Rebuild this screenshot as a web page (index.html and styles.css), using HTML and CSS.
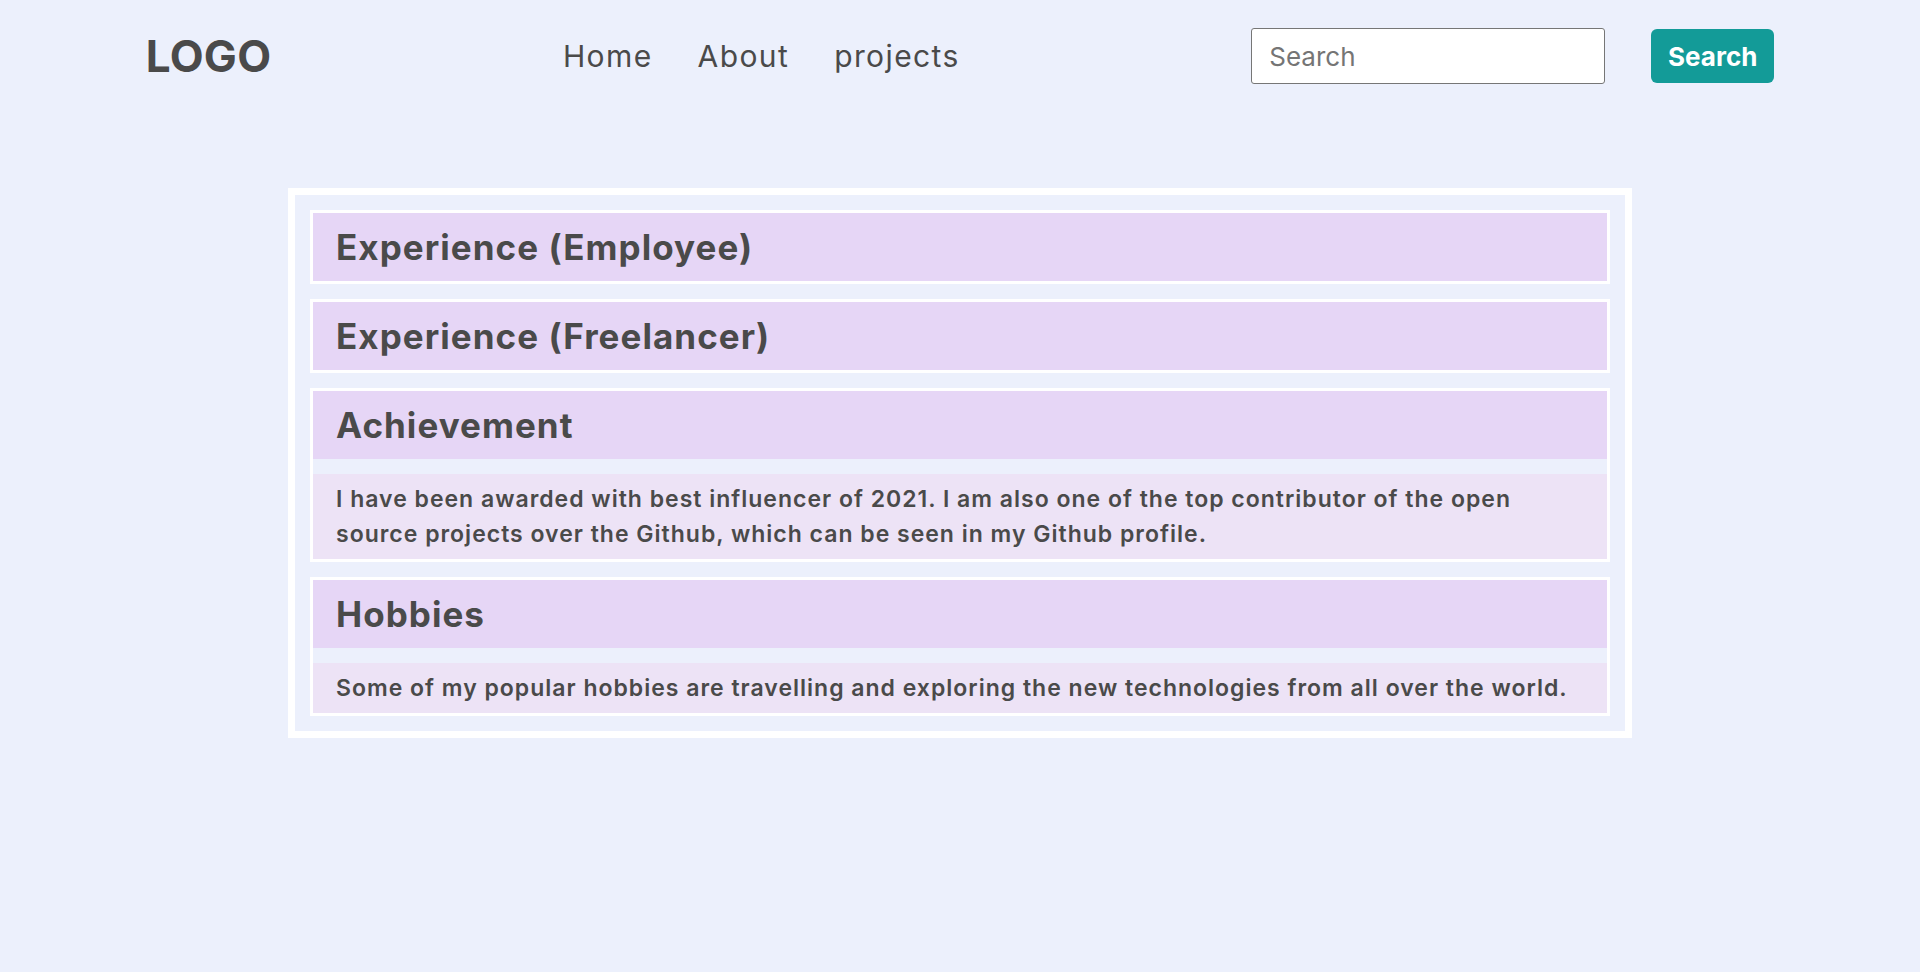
FILE: index.html
```html
<!DOCTYPE html>
<html lang="en">
<head>
<meta charset="utf-8">
<title>Portfolio</title>
<link rel="stylesheet" href="styles.css">
</head>
<body>
<header class="topbar">
  <div class="logo">LOGO</div>
  <ul class="menu">
    <li><a href="#" class="menu-link">Home</a></li>
    <li><a href="#" class="menu-link">About</a></li>
    <li><a href="#" class="menu-link">projects</a></li>
  </ul>
  <form class="search">
    <input type="text" class="search-input" placeholder="Search">
    <button type="button" class="search-btn">Search</button>
  </form>
</header>
<main class="content">
  <section class="box">
    <article class="card">
      <h2 class="card-title">Experience (Employee)</h2>
    </article>
    <article class="card">
      <h2 class="card-title">Experience (Freelancer)</h2>
    </article>
    <article class="card">
      <h2 class="card-title">Achievement</h2>
      <p class="card-text">I have been awarded with best influencer of 2021. I am also one of the top contributor of the open source projects over the Github, which can be seen in my Github profile.</p>
    </article>
    <article class="card">
      <h2 class="card-title">Hobbies</h2>
      <p class="card-text">Some of my popular hobbies are travelling and exploring the new technologies from all over the world.</p>
    </article>
  </section>
</main>
</body>
</html>
```
FILE: styles.css
```css
* { box-sizing: border-box; }

html, body {
  margin: 0;
  padding: 0;
  background: #ecf0fc;
  color: #4a4a4a;
  font-family: Inter, "Noto Sans", sans-serif;
}

.topbar {
  height: 112px;
  display: flex;
  align-items: center;
  justify-content: space-around;
}

.logo {
  font-size: 44px;
  font-weight: 700;
  line-height: 1;
  color: #4a4a4a;
  letter-spacing: 0.3px;
}

.menu {
  list-style: none;
  margin: 0;
  padding: 0;
  display: flex;
  gap: 45px;
}

.menu-link {
  text-decoration: none;
  color: #4a4a4a;
  font-size: 30px;
  font-weight: 400;
  letter-spacing: 1.4px;
  line-height: 1;
}

.search {
  display: flex;
  align-items: center;
  gap: 46px;
  margin: 0;
}

.search-input {
  width: 354px;
  height: 56px;
  border: 1px solid #767676;
  border-radius: 3px;
  background: #fff;
  padding: 0 17px;
  font-family: Inter, "Noto Sans", sans-serif;
  font-size: 26px;
  color: #4a4a4a;
  outline: none;
}

.search-input::placeholder {
  color: #757575;
  opacity: 1;
}

.search-btn {
  width: 123px;
  height: 54px;
  border: none;
  border-radius: 6px;
  background: #139b98;
  color: #fff;
  font-family: Inter, "Noto Sans", sans-serif;
  font-size: 26px;
  font-weight: 700;
  padding: 0;
  cursor: pointer;
}

.content {
  padding-top: 76px;
}

.box {
  width: 1344px;
  margin: 0 auto;
  border: 7px solid #fff;
  padding: 15px;
  display: flex;
  flex-direction: column;
  gap: 15px;
}

.card {
  border: 3px solid #fff;
  display: flex;
  flex-direction: column;
  gap: 15px;
}

.card-title {
  margin: 0;
  background: #e6d6f6;
  font-size: 35px;
  font-weight: 700;
  letter-spacing: 1.05px;
  line-height: 68px;
  padding: 0 23px;
  color: #4a4a4a;
}

.card-text {
  margin: 0;
  background: #ede3f6;
  font-size: 23px;
  font-weight: 600;
  letter-spacing: 1px;
  line-height: 35px;
  padding: 8px 23px 7px 23px;
  color: #4a4a4a;
}
```
